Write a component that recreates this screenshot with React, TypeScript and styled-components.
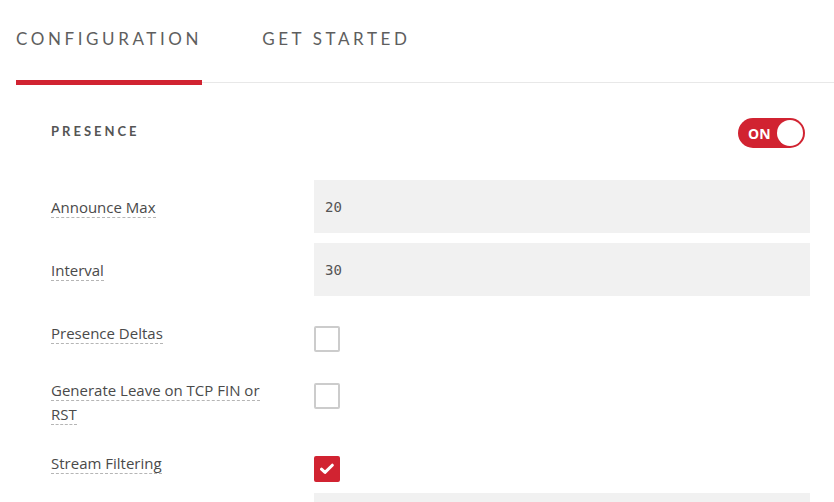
import React from "react";
import styled, { createGlobalStyle } from "styled-components";

const GlobalStyle = createGlobalStyle`
  html, body { margin: 0; padding: 0; background: #ffffff; }
  body { font-family: "Open Sans", Lato, Arial, sans-serif; color: #4a4a4a; }
  * { box-sizing: border-box; }
`;

const RED = "#d12331";

const Page = styled.div`
  width: 834px;
  height: 502px;
  overflow: hidden;
`;

const TabBar = styled.nav`
  display: flex;
  gap: 60px;
  height: 83px;
  margin-left: 16px;
  border-bottom: 1px solid #e8e8e8;
`;

const Tab = styled.div<{ $active?: boolean }>`
  position: relative;
  padding-top: 28px;
  font-family: Lato, "Open Sans", sans-serif;
  font-size: 17px;
  line-height: 22px;
  letter-spacing: 3.6px;
  color: #5e5e5e;
  text-transform: uppercase;
  &::after {
    content: "";
    display: ${(p) => (p.$active ? "block" : "none")};
    position: absolute;
    left: 0;
    right: 0;
    bottom: -3px;
    height: 5px;
    background: ${RED};
  }
`;

const Content = styled.main`
  padding: 0 24px 0 51px;
`;

const SectionHeader = styled.div`
  display: flex;
  align-items: center;
  justify-content: space-between;
  margin-top: 35px;
  margin-bottom: 32px;
`;

const SectionTitle = styled.h2`
  margin: 0 0 4px;
  font-family: Lato, "Open Sans", sans-serif;
  font-size: 13px;
  font-weight: 700;
  letter-spacing: 3px;
  color: #555555;
  line-height: 16px;
`;

const Toggle = styled.div`
  display: flex;
  align-items: center;
  justify-content: space-between;
  width: 67px;
  height: 30px;
  margin-right: 5px;
  padding: 0 2px 0 10px;
  border-radius: 15px;
  background: ${RED};
  color: #ffffff;
  font-size: 14px;
  font-weight: 700;
`;

const Knob = styled.span`
  display: block;
  width: 26px;
  height: 26px;
  border-radius: 50%;
  background: #ffffff;
`;

const Row = styled.div`
  display: flex;
  align-items: flex-start;
  margin-bottom: 10px;
`;

const LabelCell = styled.div`
  flex: 0 0 263px;
  padding: 15px 30px 0 0;
  font-size: 15px;
  line-height: 24px;
  color: #4a4a4a;
`;

const LabelText = styled.span`
  border-bottom: 1px dashed #b5b5b5;
`;

const Input = styled.div`
  flex: 1;
  height: 53px;
  display: flex;
  align-items: center;
  padding-left: 11px;
  background: #f1f1f1;
  font-family: "DejaVu Sans Mono", "Liberation Mono", monospace;
  font-size: 14px;
  color: #555555;
`;

const CheckCell = styled.div`
  flex: 1;
  padding: 20px 0 1px;
`;

const Checkbox = styled.span<{ $checked?: boolean }>`
  display: flex;
  align-items: center;
  justify-content: center;
  width: 26px;
  height: 26px;
  border-radius: 2px;
  border: 2px solid ${(p) => (p.$checked ? RED : "#cccccc")};
  background: ${(p) => (p.$checked ? RED : "#ffffff")};
`;

const Check = () => (
  <svg width="14" height="12" viewBox="0 0 14 12">
    <path d="M1.5 6.2 L5 9.4 L12.3 2.2" fill="none" stroke="#fff" strokeWidth="3" strokeLinecap="round" strokeLinejoin="round" />
  </svg>
);

type Field =
  | { label: string; kind: "input"; value: string }
  | { label: string; kind: "check"; checked: boolean };

const fields: Field[] = [
  { label: "Announce Max", kind: "input", value: "20" },
  { label: "Interval", kind: "input", value: "30" },
  { label: "Presence Deltas", kind: "check", checked: false },
  { label: "Generate Leave on TCP FIN or RST", kind: "check", checked: false },
  { label: "Stream Filtering", kind: "check", checked: true },
  { label: "", kind: "input", value: "" },
];

export default function App() {
  return (
    <Page>
      <GlobalStyle />
      <TabBar>
        <Tab $active>Configuration</Tab>
        <Tab>Get Started</Tab>
      </TabBar>
      <Content>
        <SectionHeader>
          <SectionTitle>PRESENCE</SectionTitle>
          <Toggle>
            ON
            <Knob />
          </Toggle>
        </SectionHeader>
        {fields.map((f, i) => (
          <Row key={i}>
            <LabelCell>{f.label && <LabelText>{f.label}</LabelText>}</LabelCell>
            {f.kind === "input" ? (
              <Input>{f.value}</Input>
            ) : (
              <CheckCell>
                <Checkbox $checked={f.checked}>{f.checked && <Check />}</Checkbox>
              </CheckCell>
            )}
          </Row>
        ))}
      </Content>
    </Page>
  );
}
